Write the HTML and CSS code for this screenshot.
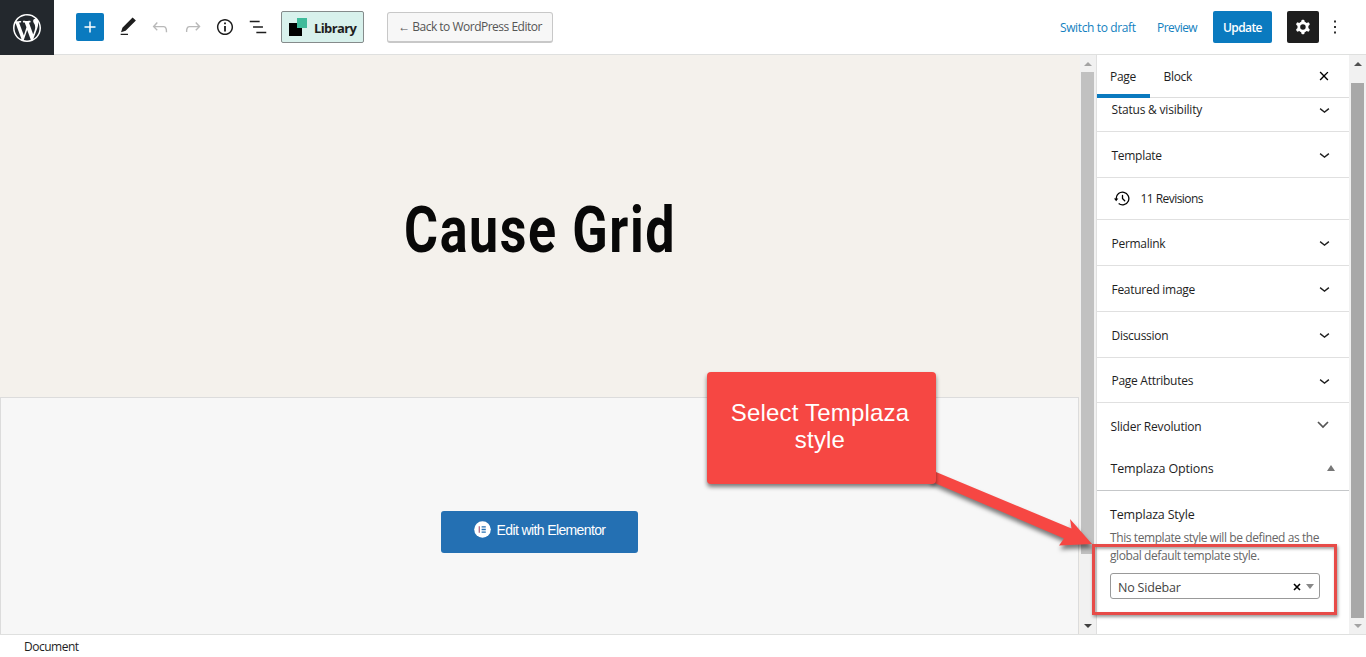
FILE: index.html
```html
<!DOCTYPE html>
<html lang="en">
<head>
<meta charset="utf-8">
<title>Edit Page</title>
<link rel="stylesheet" href="styles.css">
</head>
<body>
<svg class="defs" width="0" height="0"><defs>
<symbol id="chev" viewBox="0 0 24 24"><path d="M17.5 11.6L12 16l-5.5-4.4.9-1.2L12 14l4.5-3.6 1 1.2z"/></symbol>
</defs></svg>
<div class="app">
  <header class="topbar">
    <div class="wp"><svg width="28" height="28" viewBox="0 0 20 20"><path d="M20 10c0-5.51-4.49-10-10-10C4.48 0 0 4.49 0 10c0 5.52 4.48 10 10 10 5.51 0 10-4.48 10-10zM7.78 15.37L4.37 6.22c.55-.02 1.17-.08 1.17-.08.5-.06.44-1.13-.06-1.11 0 0-1.45.11-2.37.11-.18 0-.37 0-.58-.01C4.12 2.69 6.87 1.11 10 1.11c2.33 0 4.45.87 6.05 2.34-.68-.11-1.65.39-1.65 1.58 0 .74.45 1.36.9 2.1.35.61.55 1.36.55 2.46 0 1.49-1.4 5-1.4 5l-3.03-8.37c.54-.02.82-.17.82-.17.5-.05.44-1.25-.06-1.22 0 0-1.44.12-2.38.12-.87 0-2.33-.12-2.33-.12-.5-.03-.56 1.2-.06 1.22l.92.08 1.26 3.41zM17.41 10c.24-.64.74-1.87.43-4.25.7 1.29 1.05 2.71 1.05 4.25 0 3.29-1.73 6.24-4.4 7.78.97-2.59 1.94-5.2 2.92-7.78zM6.1 18.09C3.12 16.65 1.11 13.53 1.11 10c0-1.3.23-2.48.72-3.59C3.25 10.3 4.67 14.2 6.1 18.09zm4.03-6.63l2.58 6.98c-.86.29-1.76.45-2.71.45-.79 0-1.57-.11-2.29-.33.81-2.38 1.62-4.74 2.42-7.1z"/></svg></div>
    <div class="tools">
      <div class="add"><svg width="22" height="22" viewBox="0 0 24 24"><path d="M18 11.2h-5.2V6h-1.6v5.2H6v1.6h5.2V18h1.6v-5.2H18z"/></svg></div>
      <svg class="tool pen" viewBox="0 0 24 24"><path d="M20.6 5L17 1.6 5.9 12.7l-1.5 4.9 5-1.6L20.6 5zM4 20.8h8v-1.5H4v1.5z"/></svg>
      <svg class="tool off" viewBox="0 0 24 24"><path d="M18.3 11.7c-.6-.6-1.4-.9-2.3-.9H6.7l2.9-3.3-1.1-1-4.5 5L8.5 16l1-1-2.7-2.7H16c.5 0 .9.2 1.3.5 1 1 1 3.4 1 4.5v.3h1.5v-.2c0-1.5 0-4.3-1.5-5.7z"/></svg>
      <svg class="tool off" viewBox="0 0 24 24"><path d="M15.6 6.5l-1.1 1 2.9 3.3H8c-.9 0-1.7.3-2.3.9-1.4 1.5-1.4 4.2-1.4 5.6v.2h1.5v-.3c0-1.1 0-3.5 1-4.5.3-.3.7-.5 1.3-.5h9.2L14.5 15l1.1 1.1 4.6-4.6-4.6-5z"/></svg>
      <svg class="tool" viewBox="0 0 24 24"><path d="M12 3.2c-4.8 0-8.8 3.9-8.8 8.8 0 4.8 3.9 8.8 8.8 8.8 4.8 0 8.8-3.9 8.8-8.8 0-4.8-4-8.8-8.8-8.8zm0 16c-4 0-7.2-3.3-7.2-7.2C4.8 8 8 4.8 12 4.8s7.2 3.3 7.2 7.2c0 4-3.2 7.2-7.2 7.2zM11 17h2v-6h-2v6zm0-8h2V7h-2v2z"/></svg>
      <svg class="tool" viewBox="0 0 24 24"><path d="M13.8 5.2H3v1.5h10.8V5.2zm-3.6 12v1.5H21v-1.5H10.2zm7.2-6H6.6v1.5h10.8v-1.5z"/></svg>
    </div>
    <div class="library"><svg width="18" height="18" viewBox="0 0 18 18"><path d="M0 5h13v13H0z"/><path class="mint" d="M8 0h10v10H8z"/></svg><span>Library</span></div>
    <div class="back"><span>← Back to WordPress Editor</span></div>
    <div class="actions">
      <span class="link draft">Switch to draft</span>
      <span class="link preview">Preview</span>
      <span class="update">Update</span>
      <span class="cog"><svg width="22" height="22" viewBox="0 0 24 24"><path fill-rule="evenodd" d="M10.289 4.836A1 1 0 0111.275 4h1.306a1 1 0 01.987.836l.244 1.466c.787.26 1.503.679 2.108 1.218l1.393-.522a1 1 0 011.216.437l.653 1.13a1 1 0 01-.23 1.273l-1.148.944a6.025 6.025 0 010 2.435l1.149.946a1 1 0 01.23 1.272l-.653 1.13a1 1 0 01-1.216.437l-1.394-.522c-.605.54-1.32.958-2.108 1.218l-.244 1.466a1 1 0 01-.987.836h-1.306a1 1 0 01-.986-.836l-.244-1.466a5.995 5.995 0 01-2.108-1.218l-1.394.522a1 1 0 01-1.217-.436l-.653-1.131a1 1 0 01.23-1.272l1.149-.946a6.026 6.026 0 010-2.435l-1.148-.944a1 1 0 01-.23-1.272l.653-1.131a1 1 0 011.217-.437l1.393.522a5.994 5.994 0 012.108-1.218l.244-1.466zM14.929 12a3 3 0 11-6 0 3 3 0 016 0z"/></svg></span>
      <svg class="more" width="22" height="22" viewBox="0 0 24 24"><path d="M13 19h-2v-2h2v2zm0-6h-2v-2h2v2zm0-6h-2V5h2v2z"/></svg>
    </div>
  </header>

  <div class="main">
    <main class="canvas">
      <section class="hero"><h1>Cause Grid</h1></section>
      <section class="builder">
        <div class="elementor"><svg width="17" height="17" viewBox="0 0 17 17"><circle cx="8.5" cy="8.5" r="8.3" fill="#fff"/><path d="M5.3 5.2v6.6" stroke="#b06a86" stroke-width="1.3"/><path d="M7.6 5.8h4.2M7.6 8.5h4.2M7.6 11.2h4.2" stroke="#2470b3" stroke-width="1.3"/></svg><span>Edit with Elementor</span></div>
      </section>
    </main>
    <div class="scroll inner"><i class="up"></i><b></b><i class="down"></i></div>
    <aside class="side">
      <div class="tabs"><span class="tab on">Page</span><span class="tab block">Block</span><svg class="close" width="22" height="22" viewBox="0 0 24 24"><path d="M12 13.06l3.712 3.713 1.061-1.06L13.061 12l3.712-3.712-1.06-1.06L12 10.938 8.288 7.227l-1.061 1.06L10.939 12l-3.712 3.712 1.06 1.061L12 13.061z"/></svg></div>
      <div class="row first"><span>Status &amp; visibility</span><svg class="chev"><use href="#chev"/></svg></div>
      <div class="row"><span>Template</span><svg class="chev"><use href="#chev"/></svg></div>
      <div class="row rev"><svg width="21" height="21" viewBox="0 0 24 24"><path d="M5.5 12h1.75l-2.5 3-2.5-3H4a8 8 0 113.134 6.35l.907-1.194A6.5 6.5 0 105.5 12zm9.53 1.97l-2.28-2.28V8.5a.75.75 0 00-1.5 0V12a.747.747 0 00.218.529l2.502 2.502a.75.75 0 101.06-1.061z"/></svg><span>11 Revisions</span></div>
      <div class="row"><span>Permalink</span><svg class="chev"><use href="#chev"/></svg></div>
      <div class="row"><span>Featured image</span><svg class="chev"><use href="#chev"/></svg></div>
      <div class="row"><span>Discussion</span><svg class="chev"><use href="#chev"/></svg></div>
      <div class="row attrs"><span>Page Attributes</span><svg class="chev"><use href="#chev"/></svg></div>
      <div class="row slider"><span>Slider Revolution</span><svg class="vee" width="12" height="8" viewBox="0 0 12 8"><path d="M1 1l5 5 5-5"/></svg></div>
      <div class="row options"><span>Templaza Options</span><i class="tri"></i></div>
      <div class="field">
        <div class="label">Templaza Style</div>
        <p class="hint">This template style will be defined as the<br>global default template style.</p>
        <div class="select"><span>No Sidebar</span><svg width="8" height="8" viewBox="0 0 8 8"><path d="M1 1l6 6M7 1L1 7"/></svg><i></i></div>
      </div>
    </aside>
    <div class="scroll outer"><i class="up"></i><b></b><i class="down"></i></div>
  </div>
  <footer class="foot"><span>Document</span></footer>

  <svg class="arrow" width="170" height="90" viewBox="930 465 170 90"><path d="M930 469.5L1071.500 528.500L1070 519L1092 544L1059 545.500L1064 538.500L930 481z"/></svg>
  <div class="callout">Select Templaza<br>style</div>
  <div class="highlight"></div>
</div>
</body>
</html>
```
FILE: styles.css
```css
* { box-sizing: border-box; }
body { margin: 0; background: #fff; color: #1e1e1e; font: 12px/18px "Open Sans", "Noto Sans", sans-serif; overflow: hidden; }
svg { display: block; flex: none; }
.defs { position: absolute; }
.app { position: relative; width: 1366px; height: 657px; display: flex; flex-direction: column; white-space: nowrap; }
.topbar { height: 55px; display: flex; align-items: center; border-bottom: 1px solid #dfe0df; flex: none; }
.wp { width: 54px; height: 55px; background: #23282d; display: flex; align-items: center; justify-content: center; margin-bottom: -1px; }
.wp svg { fill: #fff; }
.tools { display: flex; align-items: center; margin-left: 22px; width: 205px; }
.add { width: 28px; height: 28px; border-radius: 2px; background: #0a7abf; display: flex; align-items: center; justify-content: center; margin-right: 12.500px; }
.add svg { fill: #fff; }
.tool { width: 22px; height: 22px; margin-right: 10.500px; fill: #1e1e1e; }
.tool.off { fill: #b9b9b9; }
.library { width: 83px; height: 32px; border: 1px solid #858b8b; border-radius: 2px; background: #d8f1ec; display: flex; align-items: center; padding-left: 7px; gap: 7px; font-weight: 700; font-size: 13px; letter-spacing: -.6px; }
.mint { fill: #3fbb9b; }
.library span { padding-top: 2px; }
.back { margin-left: 23px; width: 166px; height: 31px; border: 1px solid #c8c8c8; border-bottom-width: 2px; border-radius: 3px; background: #f7f7f7; color: #555; display: flex; align-items: center; justify-content: center; letter-spacing: -.5px; }
.actions { margin-left: auto; display: flex; align-items: center; padding-right: 20px; color: #1381c0; }
.link { padding-top: 2px; }
.link.draft { width: 97px; letter-spacing: -.38px; }
.link.preview { width: 56px; letter-spacing: -.55px; }
.update { width: 59px; height: 32px; border-radius: 2px; background: #0a7abf; color: #fff; font-weight: 600; text-align: center; line-height: 34px; letter-spacing: -.6px; }
.cog { width: 32px; height: 32px; border-radius: 2px; background: #1e1e1e; margin: 0 5px 0 15px; display: flex; align-items: center; justify-content: center; }
.cog svg { fill: #fff; }
.more { fill: #1e1e1e; }
.main { display: flex; height: 579px; flex: none; }
.canvas { width: 1080px; background: #f4f1ec; }
.hero { height: 342px; display: flex; justify-content: center; align-items: center; padding-top: 8px; }
h1 { margin: 0; font: 700 65px/80px Roboto, sans-serif; color: #080808; letter-spacing: 2px; transform: scaleX(.8); }
.builder { height: 237px; width: 1079px; background: #f7f7f7; border: 1px solid #dcdcdc; border-bottom: 0; display: flex; justify-content: center; padding-top: 113px; }
.elementor { width: 197px; height: 42px; border-radius: 3px; background: #2470b3; color: #fff; font: 14px/18px "Liberation Sans", Arial, sans-serif; letter-spacing: -.62px; display: flex; gap: 6px; justify-content: center; padding: 10px 0 0; }
.scroll { width: 14px; background: #f1f1f1; display: flex; flex-direction: column; align-items: center; }
.scroll b { width: 13px; background: #c1c1c1; }
.scroll i { width: 0; height: 0; border: 4px solid transparent; flex: none; }
.scroll .up { border-top: 0; border-bottom-color: #505050; }
.scroll .down { border-bottom: 0; border-top-color: #404040; margin-top: auto; }
.inner { padding: 7px 1px 6px 0; width: 16px; }
.inner .up { border-bottom-color: #a3a3a3; }
.inner b { height: 482px; margin-top: 6px; }
.outer { width: 17px; padding: 7px 0 6px; }
.outer b { height: 535px; margin-top: 17px; background: #a8a8a8; }
.outer .down { border-top-color: #a3a3a3; }
.side { width: 253px; border-left: 1px solid #e0e0e0; background: #fff; }
.tabs { height: 43px; border-bottom: 1px solid #ddd; display: flex; align-items: center; }
.tab.on { width: 53px; height: 43px; border-bottom: 4px solid #0a7abf; line-height: 44px; padding-left: 13px; margin-bottom: -1px; letter-spacing: -.3px; }
.block { padding: 2px 0 0 13.500px; letter-spacing: -.3px; }
.close { margin-left: auto; margin-right: 14px; }
.row { height: 46px; border-bottom: 1px solid #e0e0e0; display: flex; align-items: center; justify-content: space-between; padding: 0 14.500px 0 14.500px; letter-spacing: -.28px; }
.row span { padding-top: 2px; }
.chev { width: 21px; height: 21px; fill: #1e1e1e; }
.first { height: 34px; padding-bottom: 11px; letter-spacing: -.2px; }
.rev { height: 42px; justify-content: flex-start; gap: 8px; letter-spacing: -.55px; }
.rev span { padding-top: 1px; }
.attrs { height: 45px; }
.attrs span { padding-top: 1px; }
.slider { height: 45px; border: 0; padding-left: 13.500px; padding-right: 20px; letter-spacing: -.2px; }
.slider svg { margin-bottom: 2px; }
.vee { fill: none; stroke: #555; stroke-width: 1.7; }
.options { height: 43px; padding-left: 13.500px; border-color: #c5c7c9; font-size: 12.5px; letter-spacing: -.15px; }
.options span { padding-top: 0; }
.tri { border: 4px solid transparent; border-top: 0; border-bottom: 6px solid #777; margin-bottom: 3px; }
.field { padding: 15px 13px; }
.label { font-size: 12.5px; font-weight: 500; letter-spacing: -.18px; }
.hint { margin: 5px 0 8px; color: #666; line-height: 18px; letter-spacing: -.41px; }
.select { width: 210px; height: 26px; border: 1px solid #999; border-radius: 3px; display: flex; align-items: center; padding: 3px 5px 0 7px; font-size: 12.5px; letter-spacing: -.2px; color: #444; }
.select svg { margin: 0 5px 2px auto; fill: none; stroke: #000; stroke-width: 1.6; }
.select i { border: 4px solid transparent; border-bottom: 0; border-top: 5px solid #888; margin-bottom: 3px; }
.foot { height: 23px; border-top: 1px solid #dfe0df; padding: 3px 0 0 24px; letter-spacing: -.5px; }
.arrow { position: absolute; left: 930px; top: 465px; fill: #f64743; filter: drop-shadow(1px 4px 2px rgba(0,0,0,.5)); }
.callout { position: absolute; left: 707px; top: 372px; width: 229px; height: 112px; border-radius: 4px; background: #f64743; color: #fff; box-shadow: 0 3px 4px rgba(0,0,0,.5); font: 24px/27px "Liberation Sans", Arial, sans-serif; letter-spacing: .2px; text-align: center; padding: 27px 3px 0 0; }
.highlight { position: absolute; left: 1092px; top: 544px; width: 245px; height: 71px; border: 3px solid #e74b48; box-shadow: 1px 2px 3px rgba(0,0,0,.4), inset 1px 2px 3px rgba(0,0,0,.35); }
```
